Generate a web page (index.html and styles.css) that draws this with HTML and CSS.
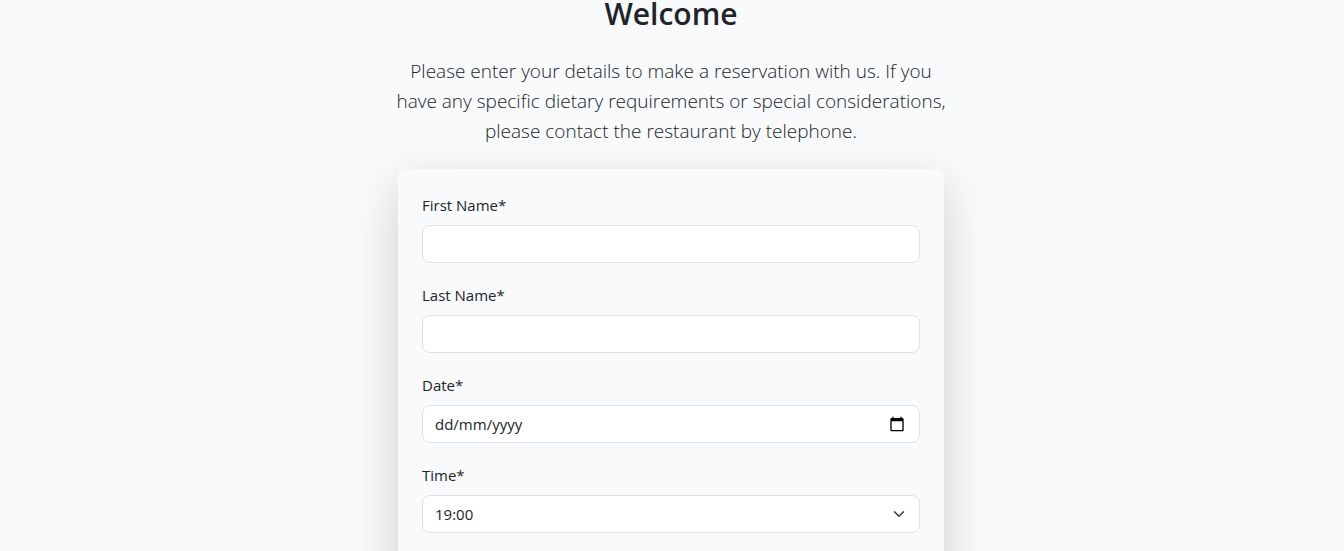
FILE: index.html
```html
<!DOCTYPE html>
<html lang="en-GB">
<head>
<meta charset="utf-8">
<meta name="viewport" content="width=device-width, initial-scale=1">
<title>Reservation</title>
<link rel="stylesheet" href="styles.css">
</head>
<body>
<main class="page">
  <header class="intro">
    <h1 class="title">Welcome</h1>
    <p class="lead">Please enter your details to make a reservation with us. If you have any specific dietary requirements or special considerations, please contact the restaurant by telephone.</p>
  </header>
  <form class="card">
    <div class="field">
      <label class="label" for="first-name">First Name*</label>
      <input class="control" type="text" id="first-name" required>
    </div>
    <div class="field">
      <label class="label" for="last-name">Last Name*</label>
      <input class="control" type="text" id="last-name" required>
    </div>
    <div class="field">
      <label class="label" for="date">Date*</label>
      <div class="control date-control">
        <input class="date-input" type="text" id="date" placeholder="dd/mm/yyyy" required>
        <button class="date-button" type="button" aria-label="Show date picker">
          <svg class="date-icon" viewBox="0 0 24 24" aria-hidden="true"><path d="M20 3h-1V1h-2v2H7V1H5v2H4c-1.100 0-2 .9-2 2v16c0 1.100.9 2 2 2h16c1.100 0 2-.9 2-2V5c0-1.100-.9-2-2-2zm0 18H4V8h16v13z"/></svg>
        </button>
      </div>
    </div>
    <div class="field">
      <label class="label" for="time">Time*</label>
      <div class="select-wrap">
        <select class="control select" id="time" required>
          <option>19:00</option>
        </select>
        <svg class="chevron" viewBox="0 0 16 16" aria-hidden="true"><path d="m2 5 6 6 6-6"/></svg>
      </div>
    </div>
  </form>
</main>
</body>
</html>
```

FILE: styles.css
```css
*,
*::before,
*::after {
  box-sizing: border-box;
}

body {
  margin: 0;
  background: #f8fafc;
  color: #212529;
  font-family: "Segoe UI", "Open Sans", "Noto Sans", sans-serif;
  font-size: 15px;
  line-height: 24px;
}

.page {
  display: flex;
  flex-direction: column;
  align-items: center;
  height: 100vh;
  padding-right: 2px;
  overflow: hidden;
}

.intro {
  width: 100%;
  max-width: 556px;
  text-align: center;
}

.title {
  margin: 0 0 28px;
  font-size: 30px;
  font-weight: 600;
  line-height: 28px;
}

.lead {
  margin: 0 0 23px;
  font-size: 19px;
  font-weight: 300;
  line-height: 30px;
}

.card {
  display: flex;
  flex-direction: column;
  flex-shrink: 0;
  gap: 20px;
  width: 100%;
  max-width: 546px;
  padding: 24px 24px 120px;
  border-radius: 6px;
  background: #f8fafc;
  box-shadow: 0 16px 48px rgba(0, 0, 0, 0.175);
}

.field {
  display: flex;
  flex-direction: column;
  gap: 8px;
}

.label {
  align-self: flex-start;
}

.control {
  display: block;
  width: 100%;
  height: 38px;
  margin: 0;
  padding: 6px 12px;
  border: 1px solid #dee2e6;
  border-radius: 8px;
  background: #fff;
  color: inherit;
  font: inherit;
}

.date-control {
  display: flex;
  align-items: center;
}

.date-input {
  flex: 1;
  min-width: 0;
  padding: 0;
  border: 0;
  outline: 0;
  background: none;
  color: inherit;
  font: inherit;
}

.date-input::placeholder {
  color: inherit;
  opacity: 1;
}

.date-button {
  display: flex;
  padding: 2px;
  border: 0;
  background: none;
}

.date-icon {
  width: 16px;
  height: 16px;
}

.select-wrap {
  display: grid;
  align-items: center;
}

.select-wrap > * {
  grid-area: 1 / 1;
}

.select {
  appearance: none;
  padding-right: 36px;
}

.chevron {
  justify-self: end;
  width: 12px;
  height: 12px;
  margin-right: 15px;
  fill: none;
  stroke: #343a40;
  stroke-width: 2;
  stroke-linecap: round;
  stroke-linejoin: round;
  pointer-events: none;
}
```
